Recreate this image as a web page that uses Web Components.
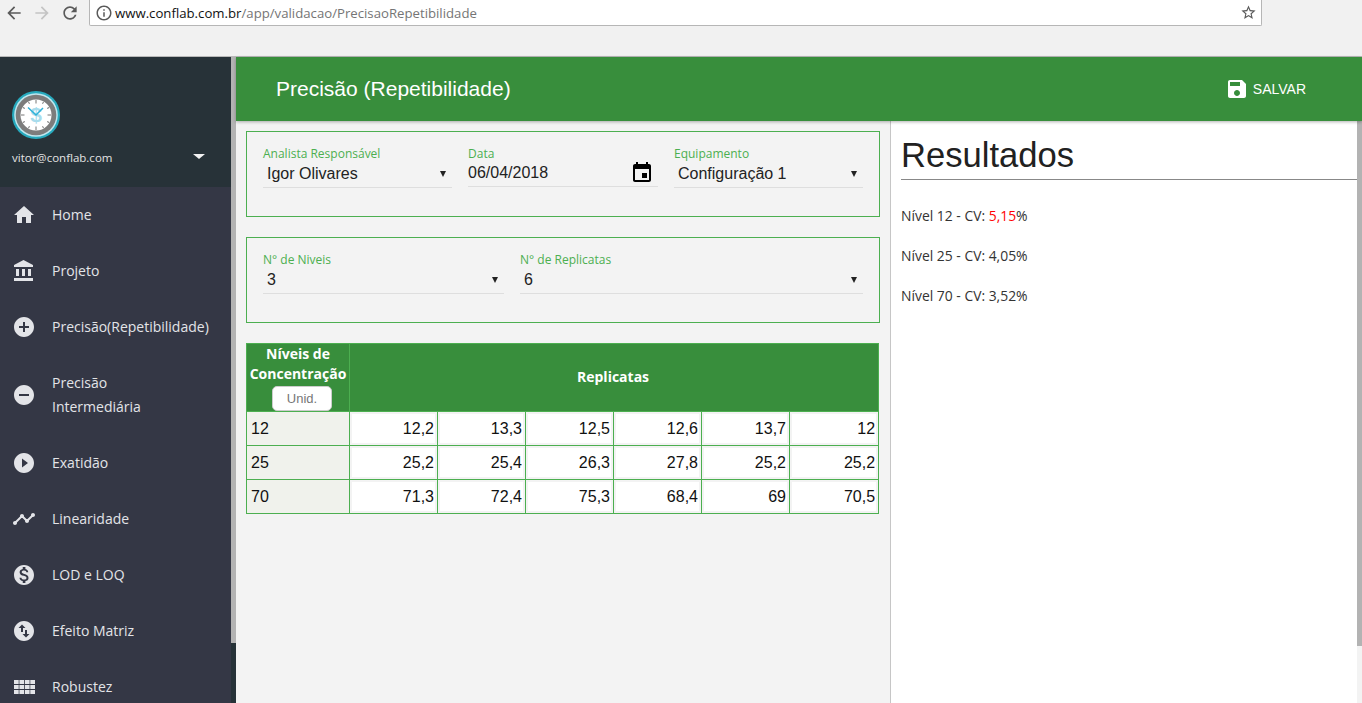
<!DOCTYPE html>
<html lang="pt-BR">
<head>
<meta charset="utf-8">
<title>Precisão (Repetibilidade)</title>
<style>
  html, body { margin: 0; height: 703px; overflow: hidden; background: #f3f3f3; }
  body { display: flex; flex-direction: column; font-family: "Open Sans", "Liberation Sans", sans-serif; }
</style>
</head>
<body>
<browser-bar url-host="www.conflab.com.br" url-path="/app/validacao/PrecisaoRepetibilidade"></browser-bar>
<app-shell>
  <side-nav slot="nav" email="vitor@conflab.com">
    <nav-item icon="home">Home</nav-item>
    <nav-item icon="bank">Projeto</nav-item>
    <nav-item icon="plus">Precisão(Repetibilidade)</nav-item>
    <nav-item icon="minus">Precisão<br>Intermediária</nav-item>
    <nav-item icon="play">Exatidão</nav-item>
    <nav-item icon="chart">Linearidade</nav-item>
    <nav-item icon="money">LOD e LOQ</nav-item>
    <nav-item icon="swap">Efeito Matriz</nav-item>
    <nav-item icon="grid">Robustez</nav-item>
  </side-nav>
  <app-header slot="header" title="Precisão (Repetibilidade)"></app-header>
  <form-panel slot="main" cols="189px 190px 189px">
    <form-field label="Analista Responsável" value="Igor Olivares" kind="select"></form-field>
    <form-field label="Data" value="06/04/2018" kind="date"></form-field>
    <form-field label="Equipamento" value="Configuração 1" kind="select"></form-field>
  </form-panel>
  <form-panel slot="main" cols="241px 343px">
    <form-field label="N° de Niveis" value="3" kind="select"></form-field>
    <form-field label="N° de Replicatas" value="6" kind="select"></form-field>
  </form-panel>
  <replicate-table slot="main"></replicate-table>
  <results-pane slot="side" heading="Resultados">
    <p>Nível 12 - CV: <b>5,15</b>%</p>
    <p>Nível 25 - CV: 4,05%</p>
    <p>Nível 70 - CV: 3,52%</p>
  </results-pane>
</app-shell>

<script>
const ICONS = {
  home: 'M10 20v-6h4v6h5v-8h3L12 3 2 12h3v8z',
  bank: 'M4 10v7h3v-7H4zm6 0v7h3v-7h-3zM2 22h19v-3H2v3zm14-12v7h3v-7h-3zm-4.5-9L2 6v2h19V6l-9.5-5z',
  plus: 'M12 2C6.48 2 2 6.48 2 12s4.48 10 10 10 10-4.48 10-10S17.52 2 12 2zm5 11h-4v4h-2v-4H7v-2h4V7h2v4h4v2z',
  minus: 'M12 2C6.48 2 2 6.48 2 12s4.48 10 10 10 10-4.48 10-10S17.52 2 12 2zm5 11H7v-2h10v2z',
  play: 'M12 2C6.48 2 2 6.48 2 12s4.48 10 10 10 10-4.48 10-10S17.52 2 12 2zm-2 14.5v-9l6 4.5-6 4.5z',
  chart: 'M23 8c0 1.1-.9 2-2 2-.18 0-.35-.02-.51-.07l-3.56 3.55c.05.16.07.34.07.52 0 1.1-.9 2-2 2s-2-.9-2-2c0-.18.02-.36.07-.52l-2.55-2.55c-.16.05-.34.07-.52.07s-.36-.02-.52-.07l-4.55 4.56c.05.16.07.33.07.51 0 1.1-.9 2-2 2s-2-.9-2-2 .9-2 2-2c.18 0 .35.02.51.07l4.56-4.55C8.02 9.36 8 9.18 8 9c0-1.1.9-2 2-2s2 .9 2 2c0 .18-.02.36-.07.52l2.55 2.55c.16-.05.34-.07.52-.07s.36.02.52.07l3.55-3.56C19.02 8.35 19 8.18 19 8c0-1.1.9-2 2-2s2 .9 2 2z',
  money: 'M12 2C6.48 2 2 6.48 2 12s4.48 10 10 10 10-4.48 10-10S17.52 2 12 2zm1.41 16.09V20h-2.67v-1.93c-1.71-.36-3.16-1.46-3.27-3.4h1.96c.1 1.05.82 1.87 2.65 1.87 1.96 0 2.4-.98 2.4-1.59 0-.83-.44-1.61-2.67-2.14-2.48-.6-4.18-1.62-4.18-3.67 0-1.72 1.39-2.84 3.11-3.21V4h2.67v1.95c1.86.45 2.79 1.86 2.85 3.39H14.3c-.05-1.11-.64-1.87-2.22-1.87-1.5 0-2.4.68-2.4 1.64 0 .84.65 1.39 2.67 1.91s4.18 1.39 4.18 3.91c-.01 1.83-1.38 2.83-3.12 3.16z',
  swap: 'M12 2C6.48 2 2 6.48 2 12s4.48 10 10 10 10-4.48 10-10S17.52 2 12 2zM6.5 9L10 5.5 13.5 9H11v4H9V9H6.5zm11 6L14 18.5 10.5 15H13v-4h2v4h2.5z',
  grid: 'M2 5h4.7v4H2zm5.4 0h4.7v4H7.4zm5.5 0h4.7v4h-4.7zm5.4 0H23v4h-4.7zM2 10h4.7v4H2zm5.4 0h4.7v4H7.4zm5.5 0h4.7v4h-4.7zm5.4 0H23v4h-4.7zM2 15h4.7v4H2zm5.4 0h4.7v4H7.4zm5.5 0h4.7v4h-4.7zm5.4 0H23v4h-4.7z',
  save: 'M17 3H5c-1.11 0-2 .9-2 2v14c0 1.1.89 2 2 2h14c1.1 0 2-.9 2-2V7l-4-4zm-5 16c-1.66 0-3-1.34-3-3s1.34-3 3-3 3 1.34 3 3-1.34 3-3 3zm3-10H5V5h10v4z',
  event: 'M17 12h-5v5h5v-5zM16 1v2H8V1H6v2H5c-1.11 0-1.99.9-1.99 2L3 19c0 1.1.89 2 2 2h14c1.1 0 2-.9 2-2V5c0-1.1-.9-2-2-2h-1V1h-2zm3 18H5V8h14v11z',
  back: 'M20 11H7.83l5.59-5.59L12 4l-8 8 8 8 1.41-1.41L7.83 13H20v-2z',
  forward: 'M12 4l-1.41 1.41L16.17 11H4v2h12.17l-5.58 5.59L12 20l8-8z',
  reload: 'M17.65 6.35C16.2 4.9 14.21 4 12 4c-4.42 0-7.99 3.58-7.99 8s3.57 8 7.99 8c3.73 0 6.84-2.55 7.73-6h-2.08c-.82 2.33-3.04 4-5.65 4-3.31 0-6-2.69-6-6s2.69-6 6-6c1.66 0 3.14.69 4.22 1.78L13 11h7V4l-2.35 2.35z',
  info: 'M11 7h2v2h-2zm0 4h2v6h-2zm1-9C6.48 2 2 6.48 2 12s4.48 10 10 10 10-4.48 10-10S17.52 2 12 2zm0 18c-4.41 0-8-3.59-8-8s3.59-8 8-8 8 3.59 8 8-3.59 8-8 8z',
  star: 'M22 9.24l-7.19-.62L12 2 9.19 8.63 2 9.24l5.46 4.73L5.82 21 12 17.27 18.18 21l-1.63-7.03L22 9.24zM12 15.4l-3.76 2.27 1-4.28-3.32-2.88 4.38-.38L12 6.1l1.71 4.04 4.38.38-3.32 2.88 1 4.28L12 15.4z'
};
const svgIcon = (name, size) => `<svg width="${size}" height="${size}" viewBox="0 0 24 24" fill="currentColor"><path d="${ICONS[name]}"/></svg>`;

class BrowserBar extends HTMLElement {
  constructor() {
    super();
    this.attachShadow({ mode: 'open' });
  }
  connectedCallback() {
    this.shadowRoot.innerHTML = `
      <style>
        :host { display: block; flex: none; height: 56px; background: #f1f1f1; border-bottom: 1px solid #b9b9b9; }
        .row { display: flex; align-items: flex-start; height: 26px; padding-left: 4px; }
        .btn { display: flex; width: 20px; height: 26px; margin-right: 8px; align-items: center; justify-content: center; color: #5a5a5a; }
        .btn.off { color: #c4c4c4; }
        .url {
          display: flex; align-items: center; width: 1173px; height: 26px; margin-left: 1px;
          box-sizing: border-box; background: #fff; border: 1px solid #b6b6b6; border-top: 0;
          border-radius: 0 0 2px 2px; padding: 0 5px; font: 13.2px "Open Sans", sans-serif; color: #757575;
        }
        .url svg { color: #5a5a5a; flex: none; }
        .text { margin-left: 2px; flex: 1; padding-top: 1px; }
        .text span { color: #111; }
        .star { color: #555; display: flex; margin-right: -1px; }
      </style>
      <div class="row">
        <div class="btn">${svgIcon('back', 20)}</div>
        <div class="btn off">${svgIcon('forward', 20)}</div>
        <div class="btn">${svgIcon('reload', 20)}</div>
        <div class="url">
          ${svgIcon('info', 18)}
          <div class="text"><span>${this.getAttribute('url-host')}</span>${this.getAttribute('url-path')}</div>
          <div class="star">${svgIcon('star', 17)}</div>
        </div>
      </div>`;
  }
}

class AppShell extends HTMLElement {
  constructor() {
    super();
    this.attachShadow({ mode: 'open' });
    this.shadowRoot.innerHTML = `
      <style>
        :host { display: flex; flex: 1; min-height: 0; }
        .right { flex: 1; min-width: 0; display: flex; flex-direction: column; }
        .body { flex: 1; min-height: 0; display: flex; }
        .main { width: 634px; flex: none; padding: 10px 10px 0; display: flex; flex-direction: column; gap: 20px; border-right: 1px solid #c6c6c6; }
        .side { flex: 1; min-width: 0; background: #fff; }
        .bar { width: 5px; flex: none; background: #f3f3f3; }
        .bar div { height: 525px; background: #b3b3b3; }
      </style>
      <slot name="nav"></slot>
      <div class="right">
        <slot name="header"></slot>
        <div class="body">
          <div class="main"><slot name="main"></slot></div>
          <div class="side"><slot name="side"></slot></div>
          <div class="bar"><div></div></div>
        </div>
      </div>`;
  }
}

class SideNav extends HTMLElement {
  constructor() {
    super();
    this.attachShadow({ mode: 'open' });
  }
  connectedCallback() {
    const ticks = [0, 30, 60, 90, 120, 150, 180, 210, 240, 270, 300, 330]
      .map(a => `<line x1="24" y1="9" x2="24" y2="${a % 90 === 0 ? 12.5 : 11}" stroke="#777" stroke-width="1" transform="rotate(${a} 24 24)"/>`).join('');
    this.shadowRoot.innerHTML = `
      <style>
        :host { display: flex; flex: none; width: 236px; height: 646px; overflow: hidden; background: #263238; }
        .col { width: 231px; flex: none; display: flex; flex-direction: column; }
        .user { flex: none; height: 130px; box-sizing: border-box; padding: 34px 12px 0; background: #273238; position: relative; font-size: 11.5px; }
        .logo { display: block; }
        .mail { margin-top: 11px; line-height: 16px; color: #e3e3e3; }
        .caret { position: absolute; left: 193px; top: 97px; width: 0; height: 0; border: 6px solid transparent; border-top: 5px solid #f2f2f2; border-bottom: 0; }
        .menu { flex: 1; background: #343745; }
        .bar { width: 5px; flex: none; background: #263238; }
        .bar div { height: 586px; background: #b3b3b3; }
        text { font-family: "Liberation Sans", sans-serif; }
      </style>
      <div class="col">
        <div class="user">
          <svg class="logo" width="48" height="48" viewBox="0 0 48 48">
            <circle cx="24" cy="24" r="24" fill="#26a9bd"/>
            <circle cx="24" cy="24" r="21.8" fill="#bfe6ee"/>
            <circle cx="24" cy="24" r="20.3" fill="#7c7c7c"/>
            <circle cx="24" cy="24" r="15.5" fill="#fff"/>
            ${ticks}
            <text x="24" y="31" font-size="21" font-weight="700" text-anchor="middle" fill="#a8dcec">$</text>
            <path d="M16 16.5 24 24 31 17" fill="none" stroke="#2fb1d8" stroke-width="1.5"/>
          </svg>
          <div class="mail">${this.getAttribute('email')}</div>
          <div class="caret"></div>
        </div>
        <div class="menu"><slot></slot></div>
      </div>
      <div class="bar"><div></div></div>`;
  }
}

class NavItem extends HTMLElement {
  constructor() {
    super();
    this.attachShadow({ mode: 'open' });
  }
  connectedCallback() {
    this.shadowRoot.innerHTML = `
      <style>
        :host { display: flex; align-items: center; gap: 16px; padding: 16px 12px; color: #e3e4e8; font-size: 14px; line-height: 24px; }
        svg { flex: none; display: block; }
      </style>
      ${svgIcon(this.getAttribute('icon'), 24)}
      <div><slot></slot></div>`;
  }
}

class AppHeader extends HTMLElement {
  constructor() {
    super();
    this.attachShadow({ mode: 'open' });
  }
  connectedCallback() {
    this.shadowRoot.innerHTML = `
      <style>
        :host {
          display: flex; flex: none; align-items: center; justify-content: space-between; height: 64px;
          padding: 0 56px 0 40px; background: #388e3c; color: #fff;
          box-shadow: 0 1px 3px rgba(0,0,0,.3); position: relative;
          font-family: "Liberation Sans", Arial, sans-serif;
        }
        h1 { margin: 0; font-size: 21px; font-weight: 400; }
        .save { display: flex; align-items: center; gap: 4px; font-size: 14px; }
        svg { display: block; }
      </style>
      <h1>${this.getAttribute('title')}</h1>
      <div class="save">${svgIcon('save', 24)}<span>SALVAR</span></div>`;
  }
}

class FormPanel extends HTMLElement {
  constructor() {
    super();
    this.attachShadow({ mode: 'open' });
  }
  connectedCallback() {
    this.shadowRoot.innerHTML = `
      <style>
        :host {
          display: grid; grid-template-columns: ${this.getAttribute('cols')}; column-gap: 16px;
          align-content: start; box-sizing: border-box; height: 86px;
          padding: 15px 16px 0; border: 1px solid #4caf50;
        }
      </style>
      <slot></slot>`;
  }
}

class FormField extends HTMLElement {
  constructor() {
    super();
    this.attachShadow({ mode: 'open' });
  }
  connectedCallback() {
    const isDate = this.getAttribute('kind') === 'date';
    this.shadowRoot.innerHTML = `
      <style>
        :host { display: block; }
        .label { font: 12px/14px "Open Sans", sans-serif; color: #4caf50; height: 14px; }
        .value {
          position: relative; height: ${isDate ? 25 : 26}px; border-bottom: 1px solid #dedede;
          font: 16px/${isDate ? 24 : 26}px "Liberation Sans", Arial, sans-serif; color: #222; padding-left: ${isDate ? 0 : 4}px;
        }
        .arrow { position: absolute; right: 6px; top: 10px; width: 0; height: 0; border: 3.5px solid transparent; border-top: 6px solid #222; border-bottom: 0; }
        svg { position: absolute; right: 4px; top: 0; color: #000; }
      </style>
      <div class="label">${this.getAttribute('label')}</div>
      <div class="value">${this.getAttribute('value')}${isDate ? svgIcon('event', 24) : '<span class="arrow"></span>'}</div>`;
  }
}

class ReplicateTable extends HTMLElement {
  constructor() {
    super();
    this.attachShadow({ mode: 'open' });
  }
  connectedCallback() {
    const rows = [
      ['12', '12,2', '13,3', '12,5', '12,6', '13,7', '12'],
      ['25', '25,2', '25,4', '26,3', '27,8', '25,2', '25,2'],
      ['70', '71,3', '72,4', '75,3', '68,4', '69', '70,5']
    ];
    const widths = [103, 88, 88, 88, 88, 88, 89];
    this.shadowRoot.innerHTML = `
      <style>
        :host { display: block; font: 16px "Liberation Sans", Arial, sans-serif; color: #111; }
        table { border-collapse: separate; border-spacing: 0; table-layout: fixed; width: 633px; border-top: 1px solid #4caf50; border-left: 1px solid #4caf50; }
        th, td { box-sizing: border-box; border-right: 1px solid #4caf50; border-bottom: 1px solid #4caf50; padding: 0; }
        th { background: #388e3c; color: #fff; font: 700 14px/20px "Open Sans", sans-serif; height: 68px; vertical-align: middle; padding: 0 2px 2px 0; }
        th.first { vertical-align: top; padding: 0; }
        td { height: 34px; background: #f3f3f3; }
        td.lvl { background: #f0f2ec; padding: 0 0 0 4px; }
        .in { height: 29px; line-height: 29px; margin: 2px 0 2px 2px; width: calc(100% - 4px); background: #fff; text-align: right; box-sizing: border-box; padding-right: 1px; }
        button { display: block; margin: 2px 0 0 25px; width: 60px; height: 25px; padding: 0; background: #fff; border: 1px solid #ccc; border-radius: 5px; font: 13px "Liberation Sans", Arial, sans-serif; color: #777; }
        .head { display: block; white-space: nowrap; }
      </style>
      <table>
        <colgroup>${widths.map(w => `<col style="width:${w}px">`).join('')}</colgroup>
        <tr>
          <th class="first"><span class="head">Níveis de<br>Concentração</span><button type="button">Unid.</button></th>
          <th colspan="6">Replicatas</th>
        </tr>
        ${rows.map(r => `<tr><td class="lvl">${r[0]}</td>${r.slice(1).map(v => `<td><div class="in">${v}</div></td>`).join('')}</tr>`).join('')}
      </table>`;
  }
}

class ResultsPane extends HTMLElement {
  constructor() {
    super();
    this.attachShadow({ mode: 'open' });
  }
  connectedCallback() {
    this.shadowRoot.innerHTML = `
      <style>
        :host { display: block; padding-left: 10px; color: #333; }
        h2 { margin: 0; height: 58px; font: 400 34.6px/69px "Liberation Sans", Arial, sans-serif; color: #212121; border-bottom: 1px solid #888; }
        .list { padding-top: 16px; font-size: 13.9px; line-height: 40px; }
        ::slotted(p) { margin: 0; }
      </style>
      <h2>${this.getAttribute('heading')}</h2>
      <div class="list"><slot></slot></div>`;
    this.querySelectorAll('b').forEach(b => { b.style.fontWeight = '400'; b.style.color = '#f00'; });
  }
}

customElements.define('browser-bar', BrowserBar);
customElements.define('app-shell', AppShell);
customElements.define('side-nav', SideNav);
customElements.define('nav-item', NavItem);
customElements.define('app-header', AppHeader);
customElements.define('form-panel', FormPanel);
customElements.define('form-field', FormField);
customElements.define('replicate-table', ReplicateTable);
customElements.define('results-pane', ResultsPane);
</script>
</body>
</html>
